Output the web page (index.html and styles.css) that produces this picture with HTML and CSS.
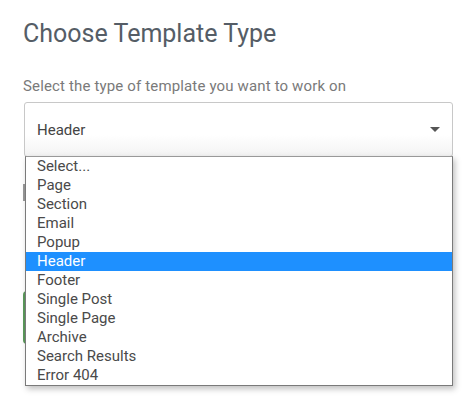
FILE: index.html
```html
<!DOCTYPE html>
<html lang="en">

<head>
    <meta charset="UTF-8">
    <meta name="viewport" content="width=device-width, initial-scale=1.0">
    <title>Choose Template Type</title>
    <link rel="stylesheet" href="styles.css">
</head>

<body>
    <div class="page">
        <h1 class="title">Choose Template Type</h1>
        <label class="hint" for="template-type">Select the type of template you want to work on</label>
        <div class="picker">
            <div class="select" id="template-type">
                <span>Header</span>
                <span class="arrow"></span>
            </div>
            <ul class="options">
                <li>Select...</li>
                <li>Page</li>
                <li>Section</li>
                <li>Email</li>
                <li>Popup</li>
                <li class="active">Header</li>
                <li>Footer</li>
                <li>Single Post</li>
                <li>Single Page</li>
                <li>Archive</li>
                <li>Search Results</li>
                <li>Error 404</li>
            </ul>
        </div>
        <!-- fields hidden under the open list -->
        <div class="name-field"></div>
        <div class="create-btn"></div>
    </div>
</body>

</html>
```

FILE: styles.css
```css
html,
body {
    height: 100%;
}

body {
    margin: 0;
    font-family: Roboto, "Liberation Sans", Arial, sans-serif;
    background-color: #fff;
}

.page {
    min-height: 100%;
    box-sizing: border-box;
    padding: 0 17px 0 23px;
}

.title {
    margin: 0;
    padding-top: 19px;
    font-size: 25px;
    font-weight: 400;
    line-height: 30px;
    color: #555d66;
}

.hint {
    display: block;
    margin-top: 28px;
    font-size: 15px;
    letter-spacing: 0.15px;
    line-height: 18px;
    color: #7a7a7a;
}

.picker {
    position: relative;
    margin-top: 7px;
    margin-left: 1px;
}

.select {
    display: flex;
    justify-content: space-between;
    align-items: center;
    height: 53px;
    padding: 0 12px;
    border: 1px solid #c8c8c8;
    border-radius: 3px;
    background: linear-gradient(#fff 60%, #f3f3f3);
    font-size: 15px;
    color: #444;
}

.arrow {
    width: 0;
    height: 0;
    border-left: 5px solid transparent;
    border-right: 5px solid transparent;
    border-top: 5px solid #555;
}

.options {
    position: absolute;
    top: 54px;
    left: 1px;
    right: 0;
    z-index: 10;
    margin: 0;
    padding: 0;
    list-style: none;
    background-color: #fff;
    border: 1px solid #7a7a7a;
    border-top-color: #999;
    box-shadow: 2px 3px 6px rgba(0, 0, 0, 0.25);
}

.options li {
    padding-left: 11px;
    font-size: 15px;
    line-height: 19px;
    color: #4a4a4a;
}

.options li.active {
    background-color: #1e90ff;
    color: #fff;
}

.name-field {
    height: 17px;
    margin-top: 27px;
    border-left: 2px solid #999;
}

.create-btn {
    width: 160px;
    height: 53px;
    margin-top: 90px;
    border-radius: 4px;
    background-color: #5b9a5b;
}
```
